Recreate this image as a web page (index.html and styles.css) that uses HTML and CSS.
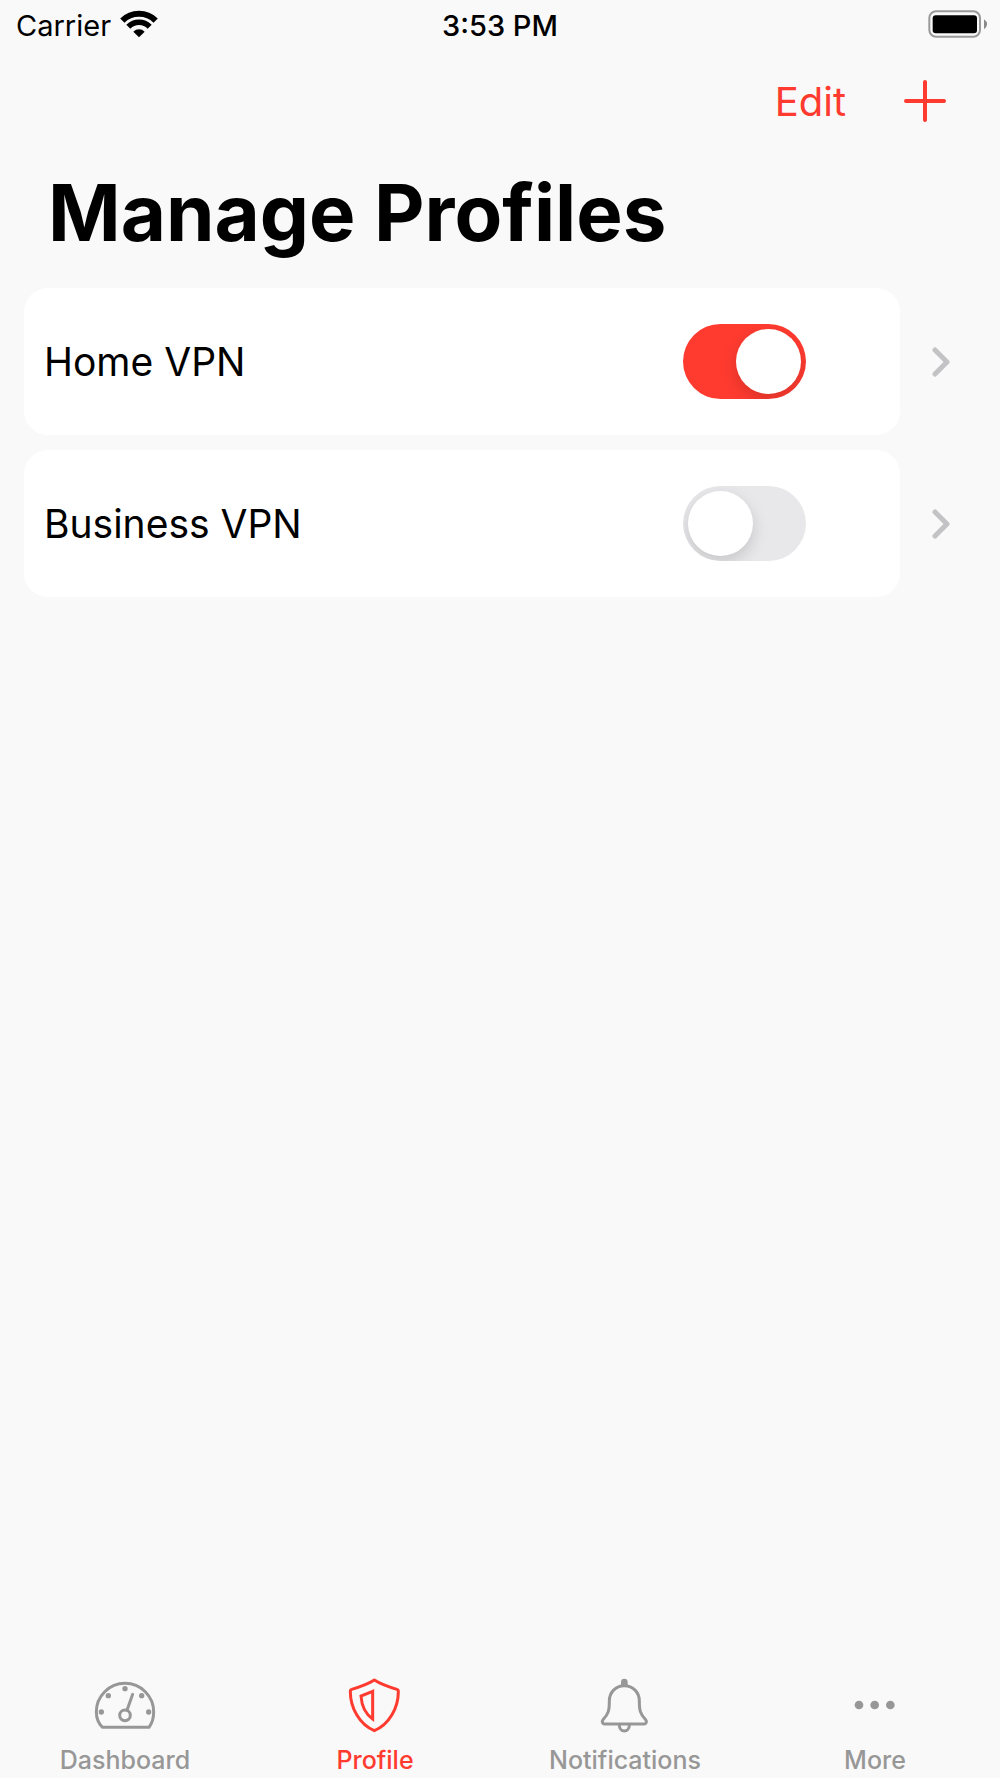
FILE: index.html
```html
<!DOCTYPE html>
<html lang="en">
<head>
<meta charset="utf-8">
<meta name="viewport" content="width=device-width, initial-scale=1">
<title>Manage Profiles</title>
<link rel="stylesheet" href="styles.css">
</head>
<body>
<div class="app">
  <div class="status">
    <div class="status-carrier">
      <span>Carrier</span>
      <svg class="wifi" viewBox="0 0 120 90" aria-hidden="true">
        <path d="M10 35A71 71 0 0 1 110 35" fill="none" stroke="currentColor" stroke-width="18"/>
        <path d="M28 53A45 45 0 0 1 92 53" fill="none" stroke="currentColor" stroke-width="17"/>
        <path d="M60 85L43 68A24 24 0 0 1 77 68Z" fill="currentColor"/>
      </svg>
    </div>
    <time class="status-time">3:53 PM</time>
    <svg class="battery" viewBox="0 0 180 90" role="img" aria-label="Battery full">
      <rect class="battery-case" x="4" y="7" width="152" height="76" rx="20"/>
      <rect x="14" y="19" width="133" height="54" rx="9"/>
      <path class="battery-tip" d="M168 31Q177 37 177 46Q177 55 168 61Z"/>
    </svg>
  </div>

  <header>
    <div class="actions">
      <button class="action" type="button">Edit</button>
      <button class="action" type="button" aria-label="Add profile">
        <svg class="plus" viewBox="0 0 42 42" aria-hidden="true"><path d="M21 2V40M2 21H40"/></svg>
      </button>
    </div>
    <h1 class="title">Manage Profiles</h1>
  </header>

  <main>
    <ul class="profiles">
      <li class="profile">
        <div class="card">
          <label for="home-vpn">Home VPN</label>
          <input class="switch" id="home-vpn" type="checkbox" role="switch" checked>
        </div>
        <a class="details" href="#home" aria-label="Home VPN details">
          <svg class="chevron" viewBox="0 0 18 30" aria-hidden="true"><path d="M3 3L15 15L3 27"/></svg>
        </a>
      </li>
      <li class="profile">
        <div class="card">
          <label for="business-vpn">Business VPN</label>
          <input class="switch" id="business-vpn" type="checkbox" role="switch">
        </div>
        <a class="details" href="#business" aria-label="Business VPN details">
          <svg class="chevron" viewBox="0 0 18 30" aria-hidden="true"><path d="M3 3L15 15L3 27"/></svg>
        </a>
      </li>
    </ul>
  </main>

  <nav class="tabs">
    <a class="tab" href="#dashboard">
      <svg class="tab-icon" viewBox="0 0 192 192" aria-hidden="true">
        <path d="M28 163Q10 144 10 117A86 86 0 0 1 182 117Q182 144 168 163Z"/>
        <circle cx="96" cy="127" r="16"/>
        <path d="M102 112L119 64"/>
        <g class="solid">
          <circle cx="96" cy="47" r="8"/><circle cx="46" cy="68" r="8"/><circle cx="146" cy="68" r="8"/>
          <circle cx="25" cy="117" r="8"/><circle cx="167" cy="117" r="8"/>
        </g>
      </svg>
      <span>Dashboard</span>
    </a>
    <a class="tab current" href="#profile" aria-current="page">
      <svg class="tab-icon" viewBox="0 0 192 192" aria-hidden="true">
        <path d="M94 21C108 30 138 42 162 49Q166 50 166 56C166 105 138 155 94 173C50 155 22 105 22 56Q22 50 26 49C50 42 80 30 94 21Z"/>
        <path class="sharp" d="M89 55L54 69C56 100 69 124 89 138Z"/>
      </svg>
      <span>Profile</span>
    </a>
    <a class="tab" href="#notifications">
      <svg class="tab-icon" viewBox="0 0 192 192" aria-hidden="true">
        <path d="M94 38C68 38 49 58 49 84C49 112 47 122 30 140C25 146 29 153 35 153H153C159 153 163 146 158 140C141 122 139 112 139 84C139 58 120 38 94 38Z"/>
        <path d="M79 157A15 17 0 0 0 109 157"/>
        <path class="solid" d="M84 37V27A10 10 0 0 1 104 27V37Z"/>
      </svg>
      <span>Notifications</span>
    </a>
    <a class="tab" href="#more">
      <svg class="tab-icon" viewBox="0 0 192 192" aria-hidden="true">
        <g class="solid"><circle cx="48" cy="96" r="13"/><circle cx="95" cy="96" r="13"/><circle cx="142" cy="96" r="13"/></g>
      </svg>
      <span>More</span>
    </a>
  </nav>
</div>
</body>
</html>
```

FILE: styles.css
```css
:root {
  --red: #ff3b30;
  --gray: #979797;
}

* {
  box-sizing: border-box;
}

body {
  margin: 0;
  background: #f9f9f9;
  color: #000;
  font-family: Inter, "Liberation Sans", sans-serif;
  font-size: 40px;
}

.app {
  display: flex;
  flex-direction: column;
  min-height: 100vh;
}

.status {
  display: grid;
  grid-template-columns: 1fr auto 1fr;
  align-items: center;
  height: 50px;
  padding: 0 12px;
  font-size: 29px;
}

.status-carrier {
  display: flex;
  align-items: center;
  gap: 8px;
  padding-left: 4px;
}

.wifi {
  width: 40px;
  height: 30px;
  margin-bottom: 2px;
}

.status-time {
  font-weight: 500;
}

.battery {
  width: 60px;
  height: 30px;
  margin-bottom: 2px;
  justify-self: end;
}

.battery-case {
  fill: none;
  stroke: #999;
  stroke-width: 6;
}

.battery-tip {
  fill: #8a8a8a;
}

.actions {
  display: flex;
  justify-content: flex-end;
  align-items: center;
  gap: 58px;
  height: 102px;
  padding: 0 54px;
}

.action {
  display: flex;
  padding: 0;
  border: 0;
  background: none;
  color: var(--red);
  font: inherit;
}

.plus {
  width: 42px;
  height: 42px;
  fill: none;
  stroke: currentColor;
  stroke-width: 4;
  stroke-linecap: round;
}

.title {
  margin: 0;
  padding: 13px 48px 27px;
  font-size: 78px;
  line-height: 96px;
  font-weight: 700;
}

.profiles {
  display: flex;
  flex-direction: column;
  gap: 15px;
  margin: 0;
  padding: 0 24px;
  list-style: none;
  font-size: 39px;
}

.profile {
  display: flex;
  align-items: center;
}

.card {
  display: flex;
  flex: 1;
  align-items: center;
  justify-content: space-between;
  padding: 36px 94px 36px 20px;
  border-radius: 24px;
  background: #fff;
}

.switch {
  appearance: none;
  display: flex;
  width: 123px;
  height: 75px;
  margin: 0;
  padding: 5px;
  border-radius: 38px;
  background: #e8e8ea;
  overflow: hidden;
}

.switch::before {
  content: "";
  width: 65px;
  height: 65px;
  border-radius: 50%;
  background: #fff;
  box-shadow: 0 6px 16px rgba(0, 0, 0, 0.15);
}

.switch:checked {
  justify-content: flex-end;
  background: var(--red);
}

.details {
  display: flex;
  justify-content: flex-end;
  width: 76px;
  padding-right: 26px;
  color: #c3c3c5;
}

.chevron {
  width: 18px;
  height: 30px;
  fill: none;
  stroke: currentColor;
  stroke-width: 5;
  stroke-linecap: round;
  stroke-linejoin: round;
}

.tabs {
  display: grid;
  grid-template-columns: repeat(4, 1fr);
  margin-top: auto;
}

.tab {
  display: flex;
  flex-direction: column;
  align-items: center;
  gap: 9px;
  padding-bottom: 4px;
  color: var(--gray);
  font-size: 25px;
  line-height: 28px;
  font-weight: 500;
  text-decoration: none;
}

.current {
  color: var(--red);
}

.tab-icon {
  width: 64px;
  height: 64px;
  fill: none;
  stroke: currentColor;
  stroke-width: 9;
  stroke-linecap: round;
  stroke-linejoin: round;
}

.tab-icon .sharp {
  stroke-linejoin: miter;
}

.tab-icon .solid {
  fill: currentColor;
  stroke: none;
}
```
